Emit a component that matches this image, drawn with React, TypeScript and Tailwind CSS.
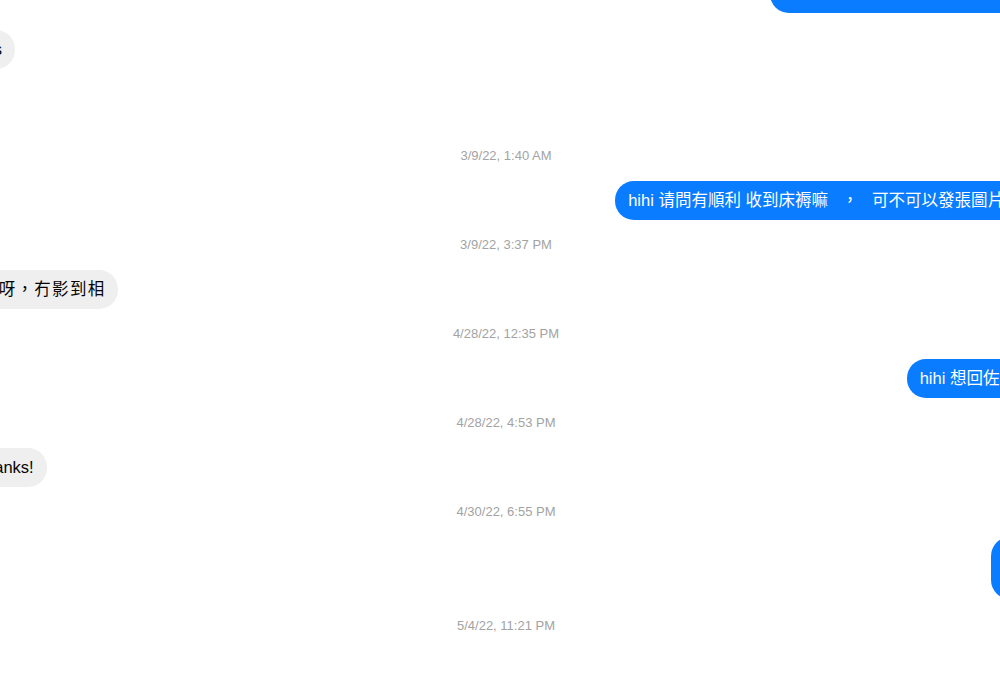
import React from "react";

type Msg =
  | { kind: "time"; text: string; extra?: string }
  | { kind: "me"; lines: string[]; extra?: string }
  | { kind: "them"; lines: string[]; extra?: string };

const messages: Msg[] = [
  { kind: "me", lines: ["I would like to ask about beds here"], extra: "-mt-[26px]" },
  { kind: "them", lines: ["Yes"], extra: "mt-[17px]" },
  { kind: "time", text: "3/9/22, 1:40 AM", extra: "mt-[62px]" },
  { kind: "me", lines: ["hihi 请問有順利 收到床褥嘛   ，   可不可以發張圖片嗎？"] },
  { kind: "time", text: "3/9/22, 3:37 PM" },
  { kind: "them", lines: ["係 呀，冇影到相"], extra: "wide" },
  { kind: "time", text: "4/28/22, 12:35 PM" },
  { kind: "me", lines: ["hihi 想回佐地址!"] },
  { kind: "time", text: "4/28/22, 4:53 PM" },
  { kind: "them", lines: ["Thanks!"] },
  { kind: "time", text: "4/30/22, 6:55 PM" },
  { kind: "me", lines: ["收到", "謝謝"], extra: "tall" },
  { kind: "time", text: "5/4/22, 11:21 PM", extra: "mt-[2px]" },
];

const font = { fontFamily: '"Liberation Sans", "Noto Sans CJK TC", sans-serif' };

const Bubble = ({ msg }: { msg: Msg }) => {
  if (msg.kind === "time") {
    return (
      <div className={`py-[17px] text-center text-[13px] leading-4 text-[#a3a3a3] ${msg.extra ?? ""}`}>
        {msg.text}
      </div>
    );
  }
  const mine = msg.kind === "me";
  const tall = msg.extra === "tall";
  const wide = msg.extra === "wide";
  return (
    <div className={`flex ${mine ? "justify-end" : "justify-start"} ${tall || wide ? "" : msg.extra ?? ""}`}>
      <div
        className={`whitespace-pre rounded-[19px] px-[13px] text-[16.5px] leading-[21px] ${
          tall ? "py-[10px]" : "py-[9px]"
        } ${wide ? "tracking-[1.3px]" : ""} ${mine ? "bg-[#0a7cff] text-white" : "bg-[#efefef] text-[#050505]"}`}
      >
        {msg.lines.map((line, i) => (
          <div key={i}>{line}</div>
        ))}
      </div>
    </div>
  );
};

export default function App() {
  return (
    <div className="h-[700px] w-[1000px] overflow-hidden bg-white" style={font}>
      <div className="-ml-[38px] flex w-[1088px] flex-col">
        {messages.map((m, i) => (
          <Bubble key={i} msg={m} />
        ))}
      </div>
    </div>
  );
}
